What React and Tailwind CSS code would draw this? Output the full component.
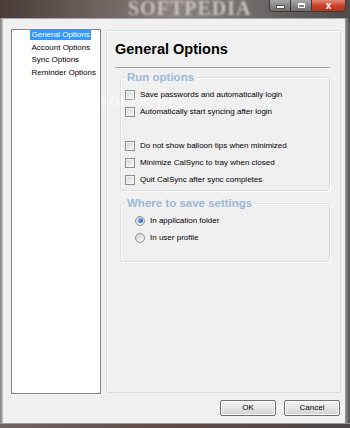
import React from 'react';

const font = "font-['Liberation_Sans',Arial,sans-serif]";

const treeItems = ['General Options', 'Account Options', 'Sync Options', 'Reminder Options'];

function CheckBox() {
  return (
    <span className="w-[10px] h-[10px] shrink-0 border border-[#8e8f8f] bg-gradient-to-br from-[#d2d5da] to-[#f8f8f8] shadow-[inset_0_0_0_1px_#f4f4f4]" />
  );
}

function Radio({ checked }) {
  return (
    <span className="w-[10px] h-[10px] shrink-0 rounded-full border border-[#8e8f8f] bg-gradient-to-br from-[#d0d3d8] to-[#f8f8f8] flex items-center justify-center">
      {checked && <span className="w-[5px] h-[5px] rounded-full bg-gradient-to-br from-[#8ec8f4] to-[#0d4e9e]" />}
    </span>
  );
}

function GroupBox({ title, className, children }) {
  return (
    <div className={`relative ml-[5px] border border-[#d5dfe5] rounded-[3px] shadow-[inset_1px_1px_0_#fff,1px_1px_0_#fff] ${className}`}>
      <span className="absolute left-[5px] -top-[8px] px-[1px] bg-[#f0f0f0] text-[11.5px] leading-[14px] font-bold text-[#9fb8d6]">
        {title}
      </span>
      {children}
    </div>
  );
}

function Row({ label, children, pad }) {
  return (
    <div className={`h-[17px] flex items-center gap-[5px] ${pad}`}>
      {children}
      <span className="text-[8px] leading-[10px] text-black">{label}</span>
    </div>
  );
}

function Button({ children }) {
  return (
    <button className="w-[56px] h-[16px] rounded-[2px] border border-[#707070] bg-gradient-to-b from-[#f2f2f2] via-[#e6e6e6] to-[#d2d2d2] shadow-[inset_0_0_0_1px_#fcfcfc] text-[8px] leading-[10px] text-black">
      {children}
    </button>
  );
}

export default function App() {
  return (
    <div className={`w-[350px] h-[428px] flex flex-col overflow-hidden bg-[#5b4d48] ${font}`}>
      {/* title bar (aero glass) */}
      <div className="relative h-[18px] shrink-0 flex items-start overflow-hidden bg-gradient-to-r from-[#4a3d39] via-[#8a837f] to-[#4f4b4b]">
        <span className="absolute left-[128px] -top-[3px] text-[20px] leading-[22px] font-bold tracking-[1px] text-[#c9c3c0] blur-[1.2px] font-['Liberation_Serif',serif]">
          SOFTPEDIA
        </span>
        <div className="relative ml-auto mr-[4px] flex h-[12px] rounded-b-[3px] border border-t-0 border-[#3a3a3a] overflow-hidden">
          <div className="w-[21px] h-full flex items-center justify-center bg-gradient-to-b from-[#a7a7a7] to-[#6c6c6c] border-r border-[#3a3a3a]">
            <span className="w-[7px] h-[2px] mt-[3px] bg-white border border-[#555] box-content" />
          </div>
          <div className="w-[21px] h-full flex items-center justify-center bg-gradient-to-b from-[#a7a7a7] to-[#6c6c6c] border-r border-[#3a3a3a]">
            <span className="w-[7px] h-[5px] border-[1.5px] border-t-[2px] border-white" />
          </div>
          <div className="w-[33px] h-full flex items-center justify-center bg-gradient-to-b from-[#e28873] via-[#c9432c] to-[#b8321c]">
            <span className="text-white text-[10px] font-bold leading-[10px]">x</span>
          </div>
        </div>
      </div>

      <div className="flex-1 flex">
        <div className="w-[3px] bg-gradient-to-r from-[#7d7775] to-[#c8c8c8]" />

        {/* client area */}
        <div className="w-[342px] bg-[#f0f0f0] flex flex-col border-t border-[#a8a8a8] relative">
          <div className="flex gap-[5px] pl-[8px] pr-[4px] pt-[10px] h-[376px]">
            {/* tree */}
            <div className="w-[90px] h-[365px] bg-white border border-[#828790] pl-[18px] flex flex-col gap-[2.5px]">
              {treeItems.map((t, i) => (
                <div key={t} className="h-[10px] flex items-center">
                  <span className={`text-[8px] leading-[10px] px-[1.5px] ${i === 0 ? 'bg-[#3399ff] text-white' : 'text-black'}`}>{t}</span>
                </div>
              ))}
            </div>

            {/* options panel */}
            <div className="flex-1 mt-[1px] h-[363px] border border-[#d5dfe5] rounded-[2px] shadow-[inset_1px_1px_0_#fff] pl-[8px] pr-[10px] pt-[11px]">
              <div className="h-[15px] text-[14.5px] leading-[15px] font-bold text-black">General Options</div>
              <div className="mt-[10px] h-[2px] border-t border-[#a0a0a0] border-b border-b-white" />

              <GroupBox title="Run options" className="mt-[8px] pt-[8px] pb-[2px] pl-[4px]">
                <Row label="Save passwords and automatically login"><CheckBox /></Row>
                <Row label="Automatically start syncing after login"><CheckBox /></Row>
                <div className="h-[17px]" />
                <Row label="Do not show balloon tips when minimized"><CheckBox /></Row>
                <Row label="Minimize CalSync to tray when closed"><CheckBox /></Row>
                <Row label="Quit CalSync after sync completes"><CheckBox /></Row>
              </GroupBox>

              <GroupBox title="Where to save settings" className="mt-[12px] pt-[8px] pb-[15px] pl-[14px]">
                <Row label="In application folder"><Radio checked /></Row>
                <Row label="In user profile"><Radio /></Row>
              </GroupBox>
            </div>
          </div>

          <div className="flex justify-end gap-[8px] pr-[5px] mt-[5px]">
            <Button>OK</Button>
            <Button>Cancel</Button>
          </div>

          {/* watermark */}
          <span className="absolute left-[98px] top-[76px] text-[13px] leading-[14px] font-bold tracking-[1px] text-white/50 font-['Liberation_Serif',serif] pointer-events-none">
            SOFTPEDIA
          </span>
        </div>

        <div className="w-[5px] bg-gradient-to-r from-[#9a9a9a] to-[#4c4c4c]" />
      </div>

      <div className="h-[5px] shrink-0 border-t border-[#9a9a9a] bg-gradient-to-r from-[#6f6461] via-[#5e4a44] to-[#4d4646]" />
    </div>
  );
}
